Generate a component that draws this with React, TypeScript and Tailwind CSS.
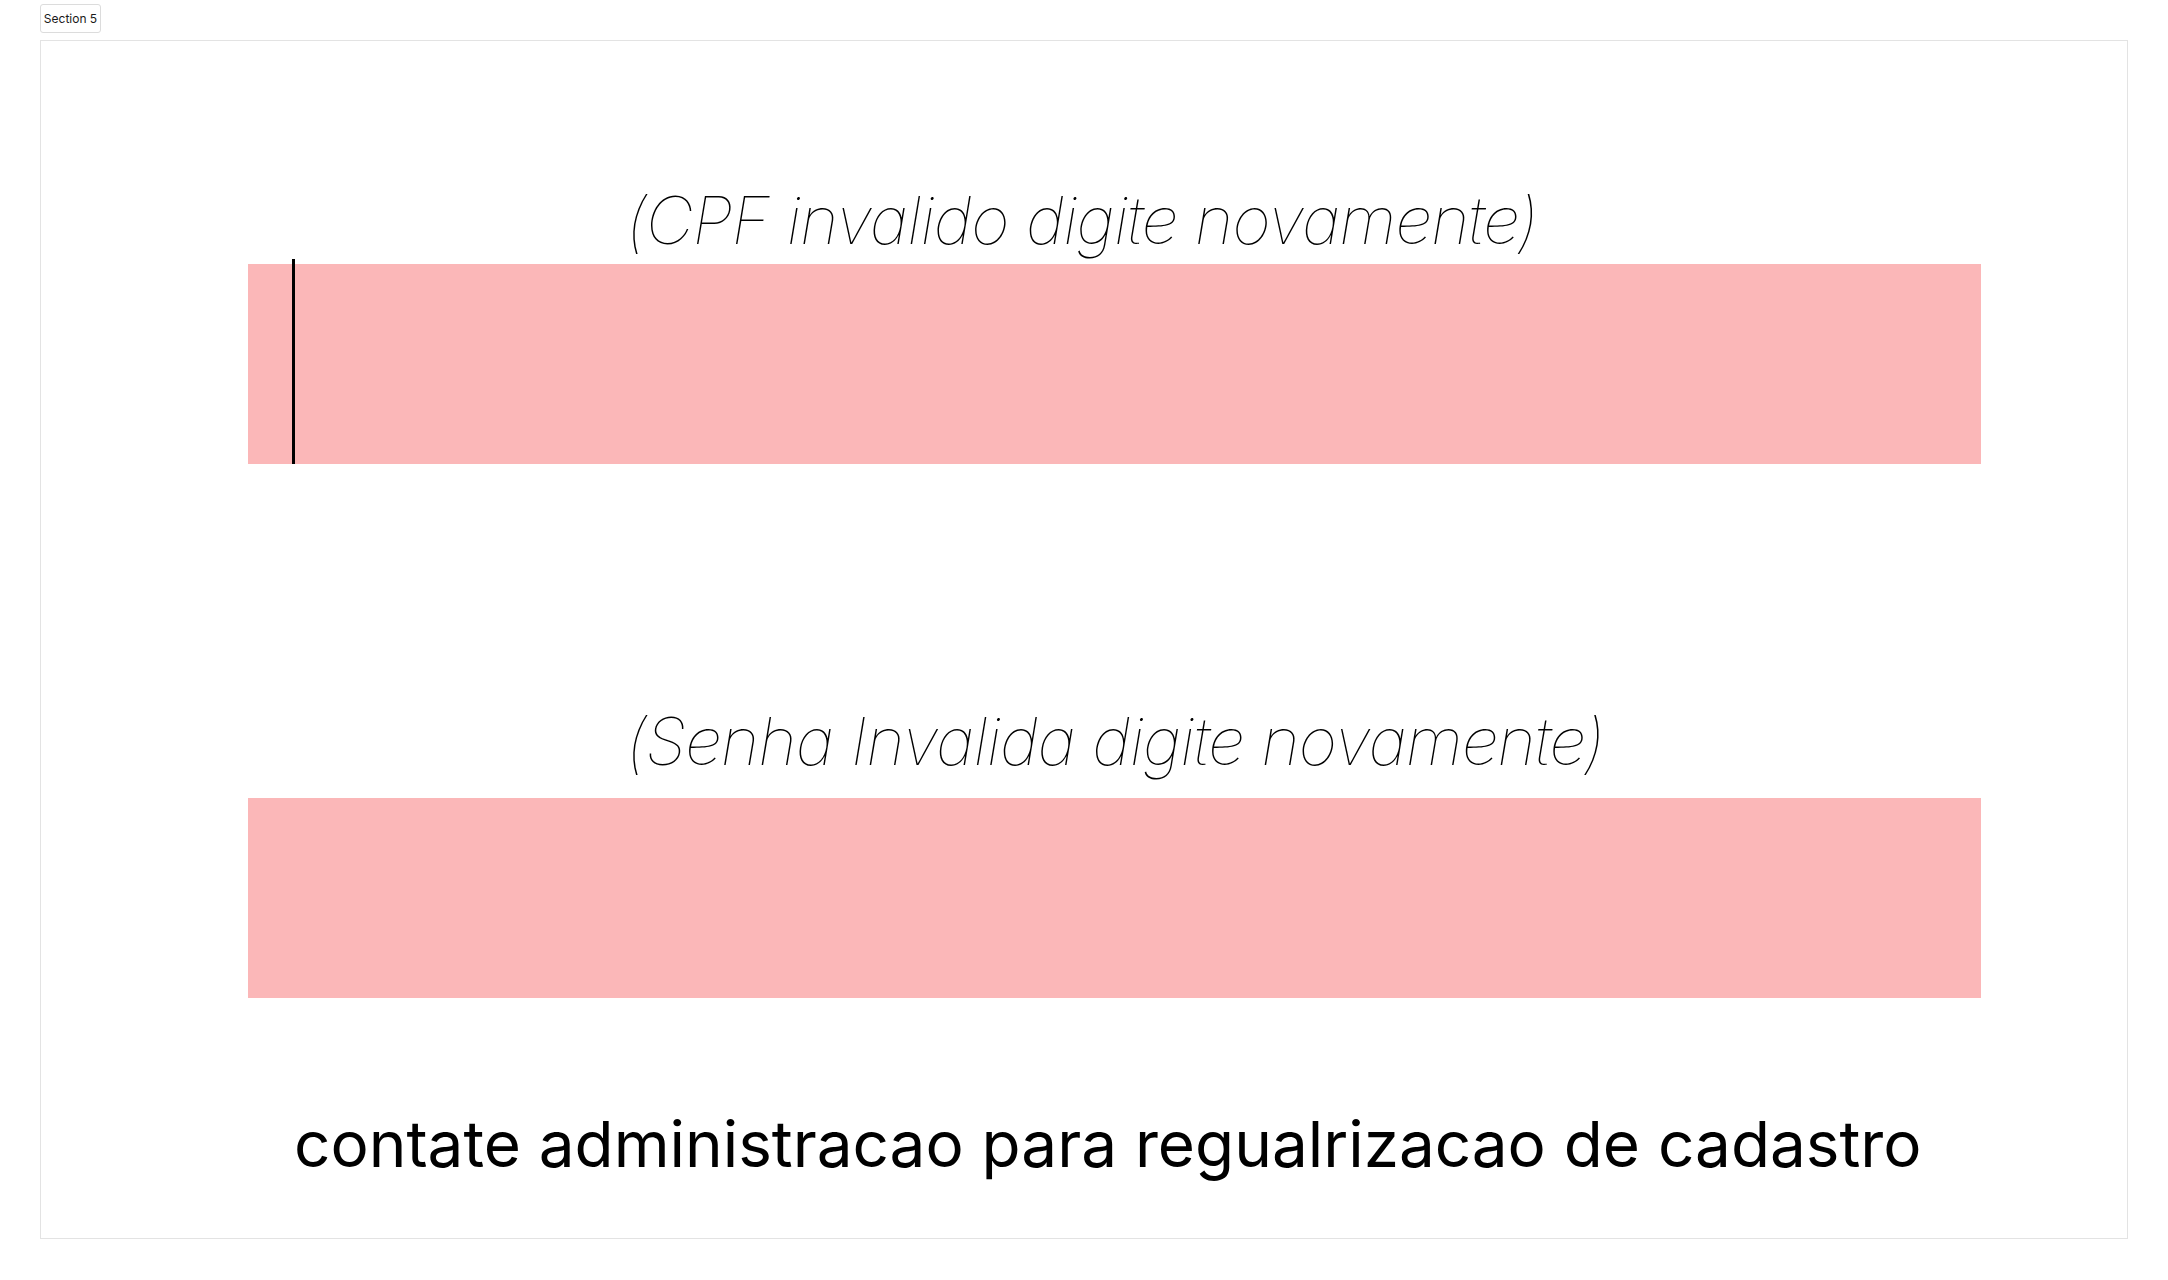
export default function App() {
  return (
    <div className="min-h-screen bg-white pl-10 pt-1 font-['Inter',sans-serif] text-black">
      <div className="flex h-[29px] w-[61px] items-center justify-center rounded-[3px] border border-[#dcdcdc] text-[12px] text-[#1a1a1a]">
        Section 5
      </div>
      <div className="mt-[7px] h-[1199px] w-[2088px] border border-[#e3e3e3] pl-[207px]">
        <div className="mt-[146px] ml-[378px] text-[66px] font-thin italic leading-none tracking-[-0.015em]">
          (CPF invalido digite novamente)
        </div>
        <div className="relative mt-[11px] h-[200px] w-[1733px] bg-[#fbb7b8]">
          <div className="absolute -top-[5px] left-[44px] h-[205px] w-[3px] bg-black" />
        </div>
        <div className="mt-[244px] ml-[378px] text-[66px] font-thin italic leading-none tracking-[-0.015em]">
          (Senha Invalida digite novamente)
        </div>
        <div className="mt-[24px] h-[200px] w-[1733px] bg-[#fbb7b8]" />
        <div className="mt-[114px] ml-[46px] text-[63.8px] font-normal leading-none">
          contate administracao para regualrizacao de cadastro
        </div>
      </div>
    </div>
  );
}
